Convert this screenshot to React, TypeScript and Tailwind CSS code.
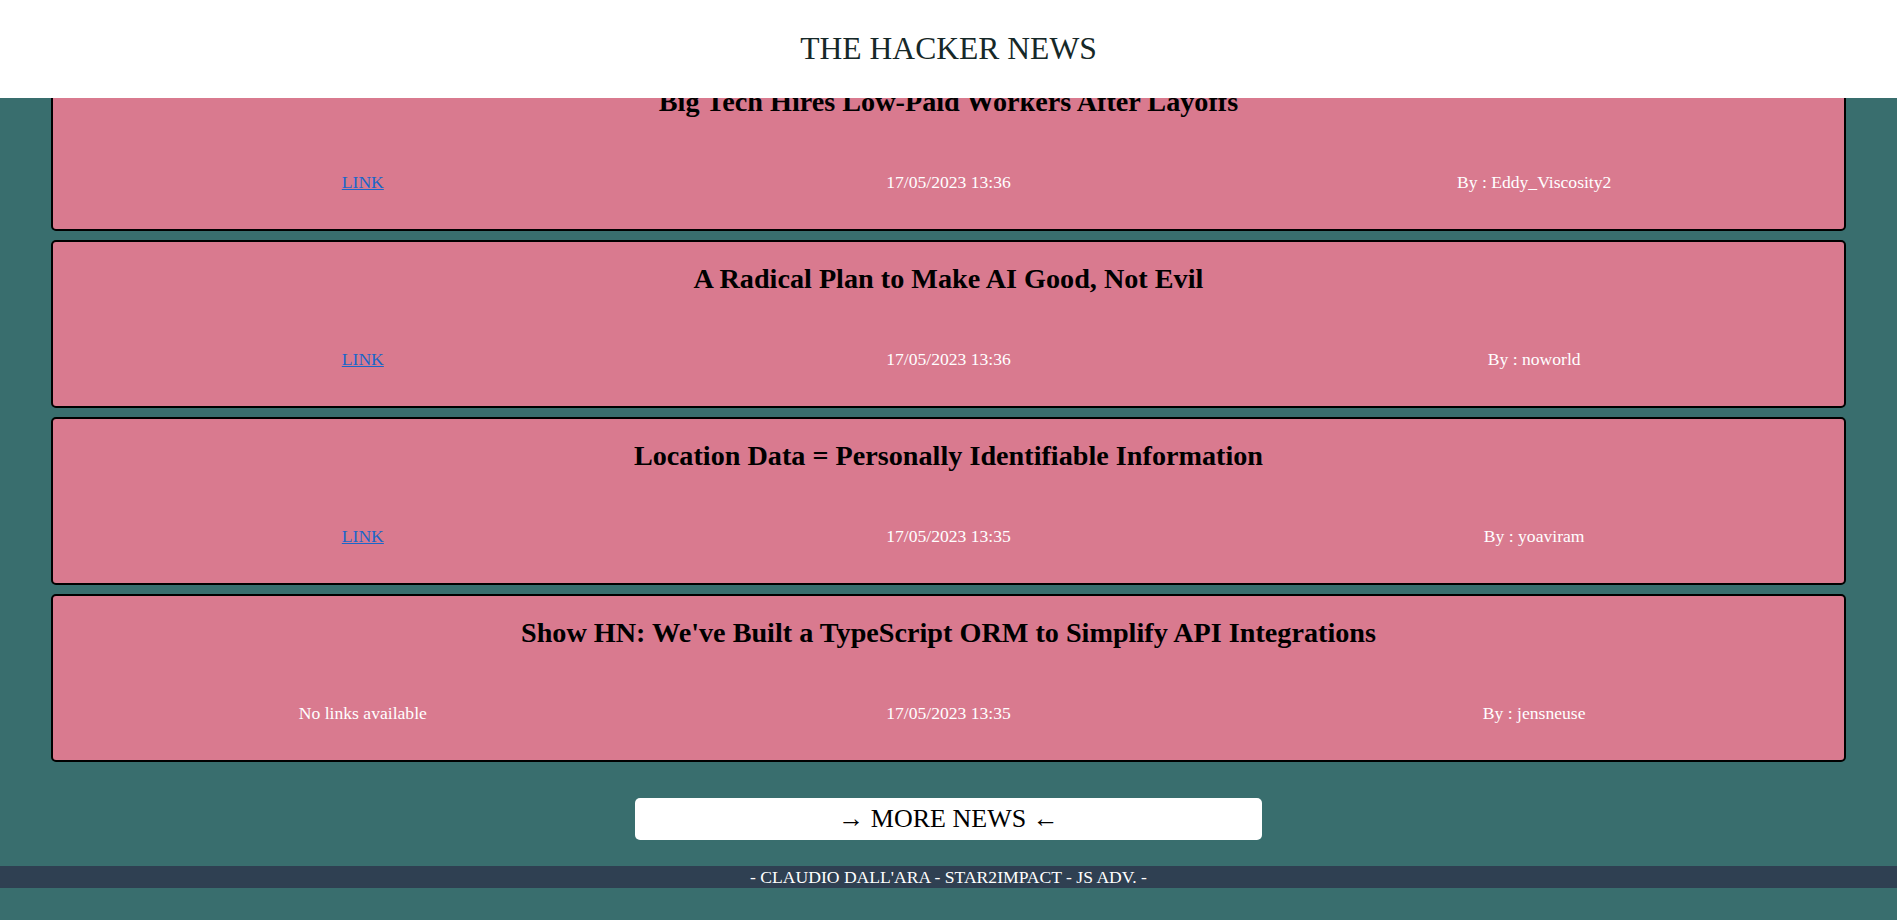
import React from 'react';

type Story = { title: string; url?: string; time: string; by: string };

const stories: Story[] = [
  { title: 'Big Tech Hires Low-Paid Workers After Layoffs', url: '#', time: '17/05/2023 13:36', by: 'Eddy_Viscosity2' },
  { title: 'A Radical Plan to Make AI Good, Not Evil', url: '#', time: '17/05/2023 13:36', by: 'noworld' },
  { title: 'Location Data = Personally Identifiable Information', url: '#', time: '17/05/2023 13:35', by: 'yoaviram' },
  { title: "Show HN: We've Built a TypeScript ORM to Simplify API Integrations", time: '17/05/2023 13:35', by: 'jensneuse' },
];

const NewsCard: React.FC<{ story: Story }> = ({ story }) => (
  <div className="h-[168px] flex flex-col border-2 border-black rounded-[5px] bg-[#d97a8f]">
    <h2 className="mt-[21px] text-center text-[28.2px] leading-[32px] font-bold text-black">{story.title}</h2>
    <div className="mt-[54px] grid grid-cols-3 px-[17px] text-center text-[17.6px] leading-[20px] text-white">
      <div>
        {story.url ? (
          <a href={story.url} className="text-[#1b66c9] underline">LINK</a>
        ) : (
          <span>No links available</span>
        )}
      </div>
      <div>{story.time}</div>
      <div>By : {story.by}</div>
    </div>
  </div>
);

export default function App() {
  return (
    <div className="min-h-screen bg-[#396e6e] font-['Liberation_Serif','Times_New_Roman',serif]">
      <header className="fixed top-0 left-0 right-0 z-10 h-[98px] bg-white flex items-center justify-center">
        <h1 className="text-[31.6px] leading-[36px] text-[#162828]">THE HACKER NEWS</h1>
      </header>
      <main className="pt-[63px] pb-[34px]">
        <div className="mx-[51px] flex flex-col gap-[9px]">
          {stories.map((s) => (
            <NewsCard key={s.title} story={s} />
          ))}
        </div>
        <div className="mt-[36px] flex justify-center">
          <button className="w-[627px] h-[42px] bg-white rounded-[5px] text-[26px] leading-[30px] text-black">→ MORE NEWS ←</button>
        </div>
        <footer className="mt-[26px] h-[22px] bg-[#2f4052] text-white text-center text-[17.6px] leading-[22px]">
          - CLAUDIO DALL'ARA - STAR2IMPACT - JS ADV. -
        </footer>
      </main>
    </div>
  );
}
